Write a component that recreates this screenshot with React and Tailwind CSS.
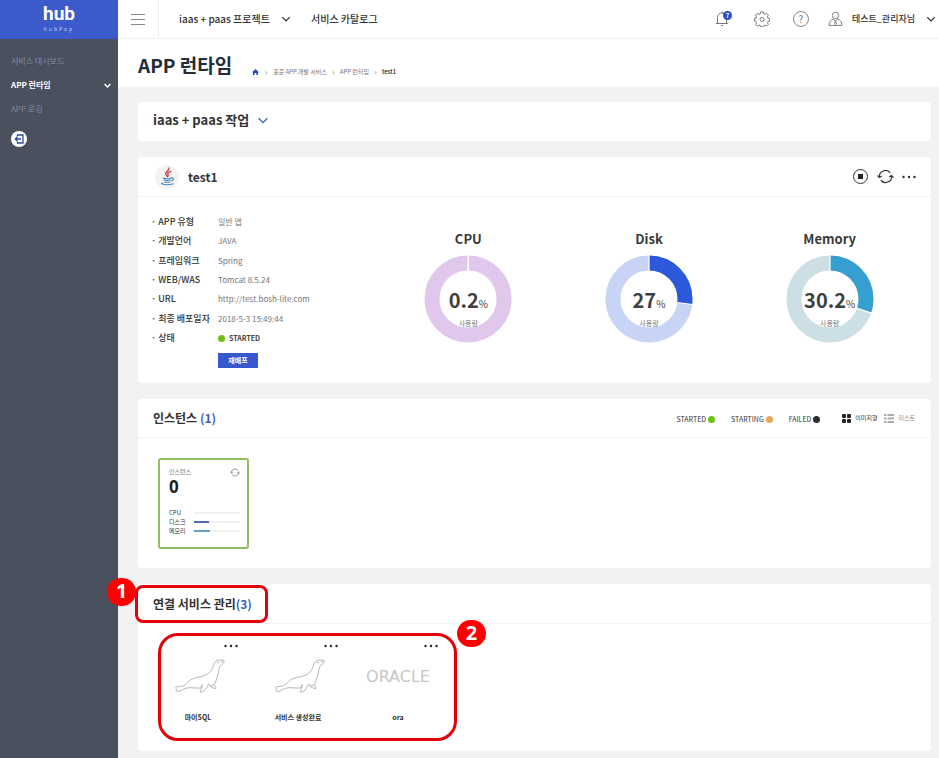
import React from "react";

const details = [
  ["APP 유형", "일반 앱"],
  ["개발언어", "JAVA"],
  ["프레임워크", "Spring"],
  ["WEB/WAS", "Tomcat 8.5.24"],
  ["URL", "http://test.bosh-lite.com"],
  ["최종 배포일자", "2018-5-3 15:49:44"],
];

const usages = [
  { name: "CPU", value: 0.2, used: "#e0c7ec", rest: "#e0c7ec" },
  { name: "Disk", value: 27, used: "#2b59d9", rest: "#c8d4f5" },
  { name: "Memory", value: 30.2, used: "#359fcf", rest: "#cbdfe5" },
];

const statuses = [
  ["STARTED", "bg-[#6cc114]"],
  ["STARTING", "bg-[#e5a95c]"],
  ["FAILED", "bg-[#2d2d2d]"],
];

const services = [
  { name: "마이SQL", kind: "mysql" },
  { name: "서비스 생성완료", kind: "mysql" },
  { name: "ora", kind: "oracle" },
];

function Chevron({ className, width = 2 }) {
  return (
    <svg viewBox="0 0 12 8" className={className} fill="none" stroke="currentColor" strokeWidth={width} aria-hidden="true">
      <path d="M1 1.500 6 6.500l5-5" />
    </svg>
  );
}

function Refresh({ className, width = 1.3 }) {
  return (
    <svg viewBox="0 0 18 16" className={className} fill="none" stroke="currentColor" strokeWidth={width} aria-hidden="true">
      <path d="M2.600 8.500A6.400 6.200 0 0 1 14 4M15.400 7.500A6.400 6.200 0 0 1 4 12" />
      <path d="M.5 7 2.600 9l2.400-1.500M17.500 9 15.400 7l-2.400 1.500" />
    </svg>
  );
}

function Dots({ className }) {
  return (
    <svg viewBox="0 0 14 4" className={className} fill="currentColor" aria-hidden="true">
      <circle cx="1.500" cy="2" r="1.200" />
      <circle cx="7" cy="2" r="1.200" />
      <circle cx="12.500" cy="2" r="1.200" />
    </svg>
  );
}

function Seal() {
  return (
    <svg viewBox="0 0 150 102" className="h-[35px] w-[50px]" fill="none" stroke="#b0b0b0" strokeWidth="2.800" strokeLinejoin="round" aria-label="MySQL" role="img">
      <path d="M147 3C142 1 132 1 126 3 117 7 116 18 112 27 107 38 97 45 86 49 72 54 58 53 47 61 38 68 32 77 22 80 15 82 5 80 2 84 0 87 4 88 6 89 2 92 2 96 8 96 17 96 22 90 30 87 46 81 62 88 78 85L82 75C83 82 76 90 76 98 82 98 86 95 90 92 95 87 96 81 101 73 104 80 110 86 122 87 124 83 120 80 118 75 126 60 129 46 131 33 133 22 136 17 142 14 146 11 149 7 147 3Z" />
      <path d="M118 75C114 78 108 81 104 79M138 3C137 7 142 8 146 7" />
      <circle cx="129" cy="9" r="1.500" fill="#999" />
    </svg>
  );
}

function Donut({ name, value, used, rest }) {
  const r = 36;
  const len = 2 * Math.PI * r;
  const angle = (value / 100) * 2 * Math.PI;
  const edge = (radius) => [44 + radius * Math.sin(angle), 44 - radius * Math.cos(angle)];
  const [x1, y1] = edge(28);
  const [x2, y2] = edge(44);
  return (
    <figure className="flex flex-col items-center">
      <figcaption className="text-[13px] leading-5 font-bold text-[#3a3a3a]">{name}</figcaption>
      <div className="mt-[6px] grid h-[88px] w-[88px] place-items-center">
        <svg viewBox="0 0 88 88" className="col-start-1 row-start-1 h-[88px] w-[88px]" fill="none" aria-hidden="true">
          <circle cx="44" cy="44" r={r} stroke={rest} strokeWidth="15" />
          <circle cx="44" cy="44" r={r} stroke={used} strokeWidth="15" strokeDasharray={`${(len * value) / 100} ${len}`} transform="rotate(-90 44 44)" />
          <path d={`M44 0V16M${x1} ${y1}L${x2} ${y2}`} stroke="#fff" strokeWidth="1.200" />
        </svg>
        <div className="col-start-1 row-start-1 flex flex-col items-center pt-5">
          <p className="text-[20px] leading-6 font-bold text-[#3f3f3f]">
            {value}
            <span className="text-[10px] font-normal">%</span>
          </p>
          <p className="text-[7px] leading-[14px] text-[#777]">사용량</p>
        </div>
      </div>
    </figure>
  );
}

function Sidebar() {
  return (
    <aside className="w-[118px] shrink-0 bg-[#4b505f] text-[8px] text-[#858b9d]">
      <a href="#home" className="flex h-[39px] flex-col items-center bg-[#3a5bc9] pt-1 text-white">
        <span className="font-['Roboto',sans-serif] text-[19px] leading-5 font-bold">hub</span>
        <span className="text-[5px] leading-[9px] tracking-[2px] text-[#c3cef4]">hubPop</span>
      </a>
      <nav className="flex flex-col pt-[10px]">
        <a href="#dashboard" className="px-[11px] leading-6">서비스 대시보드</a>
        <a href="#runtime" className="flex items-center justify-between pr-[7px] pl-[11px] leading-6 font-bold text-white">
          APP 런타임
          <Chevron className="h-[5px] w-[7px]" width={2.4} />
        </a>
        <a href="#logging" className="px-[11px] leading-6">APP 로깅</a>
      </nav>
      <button aria-label="나가기" className="mt-[10px] ml-[11px] flex h-[16px] w-[16px] items-center justify-center rounded-full bg-white text-[#2d4b9f]">
        <svg viewBox="0 0 10 10" className="h-[10px] w-[10px]" fill="none" stroke="currentColor" strokeWidth="1.300" aria-hidden="true">
          <path d="M3.500 2.500V1H9v8H3.500V7.500M7 5H1.300M3.300 3 1.300 5l2 2" />
        </svg>
      </button>
    </aside>
  );
}

function TopBar() {
  return (
    <header className="flex h-[39px] items-center border-b border-[#efefef] bg-white text-[10px] font-medium text-[#333]">
      <button aria-label="메뉴" className="flex h-full w-[41px] items-center justify-center border-r border-[#efefef]">
        <span className="flex w-[14px] flex-col gap-1">
          <span className="h-px bg-[#888]" />
          <span className="h-px bg-[#888]" />
          <span className="h-px bg-[#888]" />
        </span>
      </button>
      <label className="ml-5 flex items-center">
        <select aria-label="프로젝트" className="w-[102px] appearance-none bg-transparent leading-5">
          <option>iaas + paas 프로젝트</option>
        </select>
        <Chevron className="h-[6px] w-[10px] text-[#333]" width={1.8} />
      </label>
      <a href="#catalog" className="ml-5 leading-5">서비스 카탈로그</a>
      <div className="ml-auto flex items-center pr-[3px] text-[#777]">
        <button aria-label="알림 7" className="relative">
          <svg viewBox="0 0 16 18" className="h-[18px] w-[16px]" fill="none" stroke="currentColor" aria-hidden="true">
            <path d="M1 13.500h12M2.500 13.500V7.500a4.500 4.500 0 0 1 9 0v6M7 3V1.500M6 15.500h2" />
          </svg>
          <span className="absolute top-px left-[8px] flex h-[9px] w-[9px] items-center justify-center rounded-full bg-[#2b4bc4] text-[6px] leading-none font-bold text-white">7</span>
        </button>
        <button aria-label="설정" className="ml-[23px]">
          <svg viewBox="0 0 16 16" className="h-[16px] w-[16px]" fill="none" stroke="currentColor" strokeLinejoin="round" aria-hidden="true">
            <path d="M6.700.9h2.600l.4 1.900 1.300.5 1.600-1 1.800 1.800-1 1.600.5 1.300 1.600.4v2.600l-1.600.4-.5 1.300 1 1.600-1.800 1.800-1.600-1-1.300.5-.4 1.300H6.700l-.4-1.300-1.300-.5-1.600 1-1.800-1.800 1-1.600-.5-1.300L.5 10V7.400L2.100 7l.5-1.300-1-1.600 1.800-1.800 1.600 1 1.300-.5z" />
            <circle cx="8" cy="8.400" r="2" />
          </svg>
        </button>
        <button aria-label="도움말" className="ml-[23px] flex h-[16px] w-[16px] items-center justify-center rounded-full border border-[#888] text-[10px] leading-none font-normal">?</button>
        <button className="ml-[19px] flex items-center">
          <svg viewBox="0 0 16 16" className="h-[16px] w-[15px]" fill="none" stroke="currentColor" aria-hidden="true">
            <circle cx="8" cy="4.200" r="3.400" />
            <path d="M1 14.800c0-4 2.500-6 4.500-6.800L8 10l2.500-2c2 .8 4.500 2.800 4.500 6.800zM8 10l-1 2.500 1 1.500 1-1.500z" />
          </svg>
          <span className="ml-[9px] text-[9px] leading-5 text-[#333]">테스트_관리자님</span>
          <Chevron className="ml-[11px] h-[6px] w-[10px] text-[#333]" width={1.8} />
        </button>
      </div>
    </header>
  );
}

function TitleBar() {
  return (
    <div className="flex h-[48px] items-center bg-white pl-5">
      <h1 className="pt-[3px] text-[19px] leading-7 font-bold text-[#222d3a]">APP 런타임</h1>
      <nav aria-label="경로" className="ml-5 flex items-center pt-[17px] text-[6px] leading-3 text-[#777]">
        <a href="#home" aria-label="홈">
          <svg viewBox="0 0 8 7" className="h-[6px] w-[7px]" fill="#2b4bc4" aria-hidden="true">
            <path d="M4 0 8 3.800H7V7H5V4.800H3V7H1V3.800H0z" />
          </svg>
        </a>
        <span className="w-[14px] text-center text-[8px]">›</span>
        <a href="#services">표준 APP.개발 서비스</a>
        <span className="w-[13px] text-center text-[8px]">›</span>
        <a href="#runtime">APP 런타임</a>
        <span className="w-[13px] text-center text-[8px]">›</span>
        <span className="font-medium text-[#222]">test1</span>
      </nav>
    </div>
  );
}

function AppCard() {
  return (
    <section className="rounded-sm bg-white">
      <div className="flex h-10 items-center border-b border-[#f3f3f3] pr-[15px] pl-[17px]">
        <span className="flex h-6 w-6 items-center justify-center rounded-full bg-[#f3f3f3]">
          <svg viewBox="0 0 16 20" className="h-[19px] w-[15px]" fill="none" strokeLinecap="round" aria-hidden="true">
            <path d="M9.500 1c1 3-4.500 4-3.500 6.500.3.900 1.500 1.500 1.500 2.500M11.500 4.500C9 5.500 7.500 6.500 8.500 8c.6 1 .3 1.700-.5 2.300" stroke="#d2434b" strokeWidth="1.500" />
            <path d="M3.500 11.700c2.500.8 6.500.8 8.500 0M4.500 13.800c2 .6 4.500.6 6.500 0M5 15.800c1.800.5 3.800.5 5.500 0M12.500 11.500c2.500-.3 2.500 2.200-.3 3.200M2 17.700c3 1.500 9 1.500 12 0M2.500 17c-1 .3-1 .7.5 1" stroke="#4188bd" strokeWidth="1.200" />
          </svg>
        </span>
        <h2 className="ml-[9px] text-[12px] leading-5 font-bold text-[#333]">test1</h2>
        <div className="ml-auto flex items-center text-[#333]">
          <button aria-label="정지" className="flex h-[15px] w-[15px] items-center justify-center rounded-full border border-[#333]">
            <span className="h-[5px] w-[5px] bg-[#222]" />
          </button>
          <button aria-label="재시작" className="ml-[9px]"><Refresh className="h-[15px] w-[17px]" /></button>
          <button aria-label="더보기" className="ml-[8px]"><Dots className="h-1 w-[14px]" /></button>
        </div>
      </div>
      <div className="flex h-[186px] pt-[15px] pr-[11px]">
        <div className="w-[240px] shrink-0 pl-[13px]">
          <dl className="grid h-[136px] grid-rows-7 items-center text-[9px] leading-4">
            {details.map(([k, v]) => (
              <div key={k} className="flex items-center">
                <dt className="w-[67px] font-medium text-[#333]">· {k}</dt>
                <dd className="text-[8px] text-[#777]">{v}</dd>
              </div>
            ))}
            <div className="flex items-center">
              <dt className="w-[67px] font-medium text-[#333]">· 상태</dt>
              <dd className="flex items-center gap-1 text-[7px] font-bold text-[#444]">
                <span className="h-[7px] w-[7px] rounded-full bg-[#6cc114]" />
                STARTED
              </dd>
            </div>
          </dl>
          <button className="mt-[5px] ml-[67px] flex h-[15px] w-[40px] items-center justify-center bg-[#3758cc] text-[7px] font-bold text-white">재배포</button>
        </div>
        <div className="grid flex-1 grid-cols-3 pt-[17px]">
          {usages.map((u) => <Donut key={u.name} {...u} />)}
        </div>
      </div>
    </section>
  );
}

function InstanceCard() {
  return (
    <section className="rounded-sm bg-white">
      <div className="flex h-[39px] items-center border-b border-[#f3f3f3] pr-4 pl-[15px]">
        <h2 className="text-[12px] leading-5 font-bold text-[#333]">인스턴스 <span className="text-[#3f5fb8]">(1)</span></h2>
        <ul className="ml-auto flex items-center gap-4 pt-[2px] text-[7px] leading-4 text-[#333]">
          {statuses.map(([name, color]) => (
            <li key={name} className="flex items-center gap-[2px]">
              {name}
              <span className={"h-[7px] w-[7px] rounded-full " + color} />
            </li>
          ))}
        </ul>
        <div className="ml-[22px] flex items-center text-[6px] leading-4">
          <button className="flex items-center gap-1 text-[#333]">
            <span className="grid h-[9px] w-[9px] grid-cols-2 gap-px">
              <span className="rounded-[1px] bg-[#222]" />
              <span className="rounded-[1px] bg-[#222]" />
              <span className="rounded-[1px] bg-[#222]" />
              <span className="rounded-[1px] bg-[#222]" />
            </span>
            이미지형
          </button>
          <button className="ml-[7px] flex items-center gap-1 text-[#888]">
            <svg viewBox="0 0 10 9" className="h-[9px] w-[10px]" stroke="#aaa" strokeWidth="1.800" aria-hidden="true">
              <path d="M0 1h2.500M3.500 1H10M0 4.500h2.500M3.500 4.500H10M0 8h2.500M3.500 8H10" />
            </svg>
            리스트
          </button>
        </div>
      </div>
      <div className="h-[130px] p-5">
        <article className="h-[91px] w-[91px] rounded-[3px] border-2 border-[#93bd62] pt-[6px] pr-[7px] pl-[9px]">
          <div className="flex items-center justify-between text-[6px] leading-3 text-[#777]">
            인스턴스
            <button aria-label="새로고침"><Refresh className="h-[9px] w-[10px]" width={1.4} /></button>
          </div>
          <p className="font-['Open_Sans','Noto_Sans_CJK_KR',sans-serif] text-[17px] leading-[18px] font-bold text-[#222]">0</p>
          <ul className="mt-[12px] text-[6px] leading-[9px] text-[#333]">
            {[["CPU", "w-0"], ["디스크", "w-[15px] bg-[#5468b0]"], ["메모리", "w-[16px] bg-[#62a0cc]"]].map(([name, bar]) => (
              <li key={name} className="flex items-center">
                <span className="w-[25px]">{name}</span>
                <span className="h-[2px] flex-1 bg-[#f0f0f0]"><span className={"block h-full " + bar} /></span>
              </li>
            ))}
          </ul>
        </article>
      </div>
    </section>
  );
}

function ServiceCard() {
  return (
    <section className="relative rounded-sm bg-white">
      <div className="flex h-10 items-center border-b border-[#f3f3f3] pl-[15px]">
        <h2 className="text-[12px] leading-5 font-bold text-[#333]">연결 서비스 관리<span className="text-[#3f5fb8]">(3)</span></h2>
      </div>
      <ul className="flex h-[127px] gap-5 pt-[20px] pl-5">
        {services.map((s) => (
          <li key={s.name} className="flex w-20 flex-col items-center">
            <button aria-label={s.name + " 더보기"} className="self-end text-[#222]"><Dots className="h-1 w-[14px]" /></button>
            <div className="mt-[11px] flex h-[35px] items-center">
              {s.kind === "mysql" ? (
                <span className="pl-1"><Seal /></span>
              ) : (
                <span className="font-['DejaVu_Sans',sans-serif] text-[16px] leading-5 text-[#c6c6c6]">ORACLE</span>
              )}
            </div>
            <p className="mt-[15px] text-[7px] leading-4 font-bold text-[#333]">{s.name}</p>
          </li>
        ))}
      </ul>
      <div className="absolute top-px left-[-3px] h-[38px] w-[133px] rounded-lg border-3 border-[#e3000b]" />
      <span className="absolute top-[-6px] left-[-31px] flex h-[28px] w-[29px] items-center justify-center rounded-full bg-[#ff0000] pb-[2px] font-['Open_Sans',sans-serif] text-[20px] leading-none font-bold text-white">1</span>
      <div className="absolute top-[49px] left-[20px] h-[108px] w-[299px] rounded-[20px] border-3 border-[#e3000b]" />
      <span className="absolute top-[36px] left-[319px] flex h-[27px] w-[29px] items-center justify-center rounded-full bg-[#ff0000] pb-[2px] font-['Open_Sans',sans-serif] text-[20px] leading-none font-bold text-white">2</span>
    </section>
  );
}

export default function App() {
  return (
    <div className="flex min-h-screen bg-[#f2f2f2] font-['Noto_Sans_CJK_KR',sans-serif]">
      <Sidebar />
      <div className="flex min-w-0 flex-1 flex-col">
        <TopBar />
        <TitleBar />
        <main className="flex flex-col gap-4 pt-[15px] pr-2 pb-[7px] pl-5">
          <section className="flex h-[39px] items-center rounded-sm bg-white pb-[3px] pl-[15px]">
            <label className="flex items-center text-[13px] font-bold text-[#333]">
              <select aria-label="작업" className="w-[104px] appearance-none bg-transparent leading-5">
                <option>iaas + paas 작업</option>
              </select>
              <Chevron className="h-[7px] w-[12px] text-[#3f5fb8]" width={1.5} />
            </label>
          </section>
          <AppCard />
          <InstanceCard />
          <ServiceCard />
        </main>
      </div>
    </div>
  );
}
